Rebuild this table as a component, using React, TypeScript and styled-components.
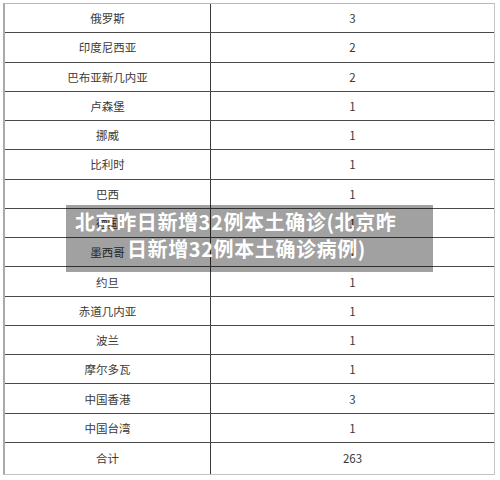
import React from "react";
import styled, { createGlobalStyle } from "styled-components";

const Global = createGlobalStyle`
  html, body { margin: 0; padding: 0; background: #ffffff; }
  body { font-family: "Noto Sans", "Noto Sans CJK SC", sans-serif; }
`;

const Page = styled.div`
  position: relative;
  width: 500px;
  height: 480px;
  padding: 3px 0 0 3px;
  box-sizing: border-box;
  overflow: hidden;
`;

const Table = styled.div`
  width: 492px;
  box-sizing: border-box;
  border-left: 2px solid #a9a9a9;
  border-right: 1px solid #c4c4c4;
  border-top: 1px solid #b8b8b8;
  border-bottom: 1px solid #c4c4c4;
  display: flex;
  flex-direction: column;
`;

const Row = styled.div<{ $tall?: boolean }>`
  display: grid;
  grid-template-columns: 206px 1fr;
  height: ${(p) => (p.$tall ? "31px" : "29.27px")};
  box-sizing: border-box;
  border-bottom: ${(p) => (p.$tall ? "none" : "1px solid #4a4a4a")};
`;

const Cell = styled.div<{ $divider?: boolean }>`
  display: flex;
  align-items: center;
  justify-content: center;
  font-family: "Noto Sans CJK SC", "Noto Sans", sans-serif;
  font-size: 11.5px;
  color: #3a3a3a;
  border-right: ${(p) => (p.$divider ? "1px solid #3a3a3a" : "none")};
`;

const Overlay = styled.div`
  position: absolute;
  left: 66px;
  top: 205px;
  width: 367px;
  height: 67px;
  box-sizing: border-box;
  padding-top: 3px;
  display: flex;
  flex-direction: column;
  align-items: flex-start;
  background: rgba(0, 0, 0, 0.37);
  color: #ffffff;
  font-family: "Noto Sans CJK SC", "Noto Sans", sans-serif;
  font-weight: 700;
  font-size: 20px;
  line-height: 27px;
  letter-spacing: 0.6px;
  white-space: nowrap;
`;

const TitleLine = styled.span<{ $indent: number }>`
  display: block;
  margin-left: ${(p) => p.$indent}px;
`;

const rows: [string, string][] = [
  ["俄罗斯", "3"],
  ["印度尼西亚", "2"],
  ["巴布亚新几内亚", "2"],
  ["卢森堡", "1"],
  ["挪威", "1"],
  ["比利时", "1"],
  ["巴西", "1"],
  ["德国", "1"],
  ["墨西哥", "1"],
  ["约旦", "1"],
  ["赤道几内亚", "1"],
  ["波兰", "1"],
  ["摩尔多瓦", "1"],
  ["中国香港", "3"],
  ["中国台湾", "1"],
];

export default function App() {
  return (
    <Page>
      <Global />
      <Table>
        {rows.map(([name, n]) => (
          <Row key={name}>
            <Cell $divider>{name}</Cell>
            <Cell>{n}</Cell>
          </Row>
        ))}
        <Row $tall>
          <Cell $divider>合计</Cell>
          <Cell>263</Cell>
        </Row>
      </Table>
      <Overlay>
        <TitleLine $indent={9}>北京昨日新增32例本土确诊(北京昨</TitleLine>
        <TitleLine $indent={61}>日新增32例本土确诊病例)</TitleLine>
      </Overlay>
    </Page>
  );
}
